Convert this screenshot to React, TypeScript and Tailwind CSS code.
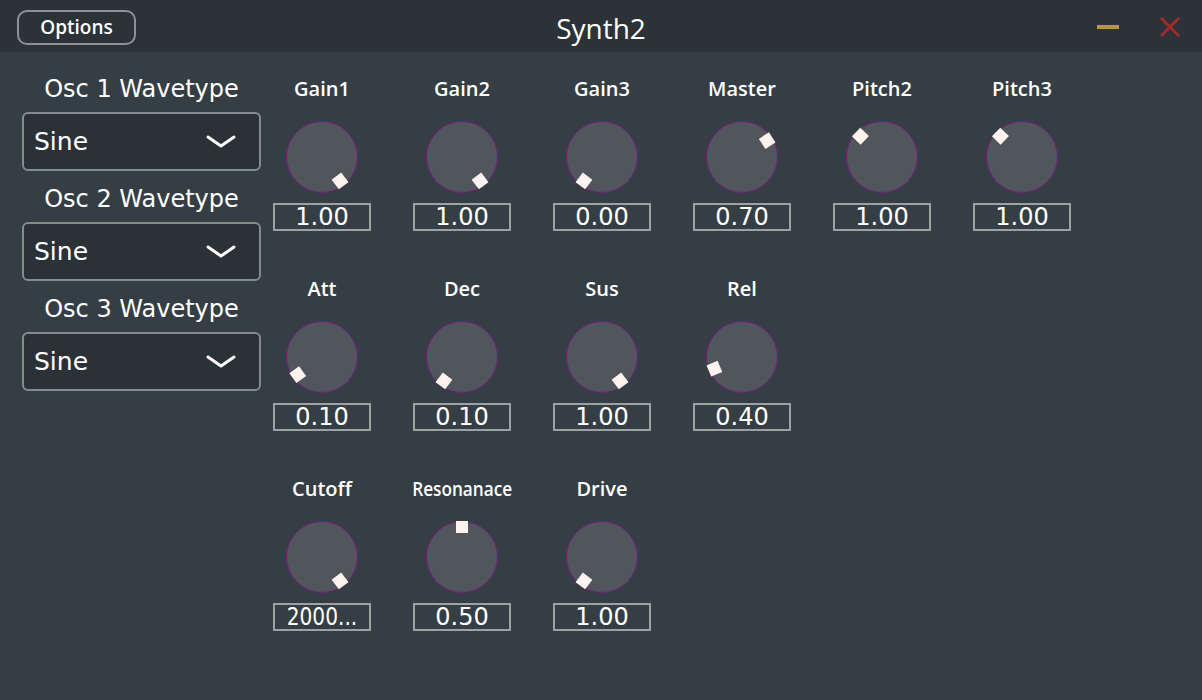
import React from "react"

type KnobData = {
  label: string
  value: string
  angle: number
  squash?: boolean
  squashValue?: boolean
}

const rows: KnobData[][] = [
  [
    { label: "Gain1", value: "1.00", angle: 143 },
    { label: "Gain2", value: "1.00", angle: 143 },
    { label: "Gain3", value: "0.00", angle: -143 },
    { label: "Master", value: "0.70", angle: 57 },
    { label: "Pitch2", value: "1.00", angle: -46 },
    { label: "Pitch3", value: "1.00", angle: -46 }
  ],
  [
    { label: "Att", value: "0.10", angle: -126 },
    { label: "Dec", value: "0.10", angle: -143 },
    { label: "Sus", value: "1.00", angle: 143 },
    { label: "Rel", value: "0.40", angle: -113 }
  ],
  [
    { label: "Cutoff", value: "2000...", angle: 143, squashValue: true },
    { label: "Resonanace", value: "0.50", angle: 0, squash: true },
    { label: "Drive", value: "1.00", angle: -143 }
  ]
]

const dejavu = { fontFamily: '"DejaVu Sans", "Noto Sans", sans-serif' }
const openSans = { fontFamily: '"Open Sans", "Noto Sans", sans-serif' }

function Knob({ label, value, angle, squash, squashValue }: KnobData) {
  return (
    <div className="w-[140px] h-[200px] flex flex-col items-center">
      <div
        className={`h-[20px] leading-[20px] text-[20px] font-semibold text-white whitespace-nowrap ${squash ? "scale-x-[0.86]" : ""}`}
        style={openSans}
      >
        {label}
      </div>

      {/* rotary */}
      <div className="relative mt-[22px] w-[72px] h-[72px] rounded-full bg-[#50565c] border border-[#7a1b80]">
        <div
          className="absolute left-1/2 top-1/2 -ml-[6px] -mt-[6px] w-[12px] h-[12px] bg-[#fff3ef]"
          style={{ transform: `rotate(${angle}deg) translateY(-30px)` }}
        />
      </div>

      {/* value box */}
      <div className="mt-[10px] w-[98px] h-[28px] border-2 border-[#9da2a3] flex items-center justify-center text-[24px] leading-none text-white">
        <span className={`whitespace-nowrap ${squashValue ? "scale-x-[0.84]" : ""}`}>
          {value}
        </span>
      </div>
    </div>
  )
}

function WaveSelect({ n }: { n: number }) {
  return (
    <div className="w-[239px] mb-[14px]">
      <div className="h-[28px] leading-[28px] text-center text-[24px] text-white whitespace-nowrap">
        Osc {n} Wavetype
      </div>
      <div className="mt-[9px] h-[59px] rounded-[6px] border-2 border-[#868c8e] bg-[#2b3237] flex items-center justify-between pl-[10px] pr-[23px]">
        <span className="text-[25px] text-white">Sine</span>
        <svg width="30" height="14" viewBox="0 0 30 14">
          <polyline
            points="2,2 15,11 28,2"
            fill="none"
            stroke="#ffffff"
            strokeWidth="3"
            strokeLinecap="round"
            strokeLinejoin="round"
          />
        </svg>
      </div>
    </div>
  )
}

export default function App() {
  return (
    <div
      className="w-[1202px] h-[700px] bg-[#353e44] flex flex-col overflow-hidden"
      style={dejavu}
    >
      {/* HEADER */}
      <div className="h-[52px] shrink-0 bg-[#2b3238] grid grid-cols-[1fr_auto_1fr] items-center">
        <div className="pl-[17px] pt-[3px]">
          <button
            className="w-[119px] h-[35px] rounded-[10px] border-2 border-[#8c9294] text-[19px] font-semibold text-white leading-none"
            style={openSans}
          >
            Options
          </button>
        </div>

        <div className="text-[28px] font-medium text-white pt-[3px]" style={openSans}>
          Synth2
        </div>

        <div className="flex items-center justify-end gap-[41px] pr-[22px] pt-[2px]">
          <div className="w-[22px] h-[4px] bg-[#b8983a]" />
          <svg width="20" height="20" viewBox="0 0 20 20">
            <path d="M1 1 L19 19 M19 1 L1 19" stroke="#a32a2a" strokeWidth="3" />
          </svg>
        </div>
      </div>

      {/* BODY */}
      <div className="flex">
        <div className="w-[252px] shrink-0 pl-[22px] pt-[23px]">
          <WaveSelect n={1} />
          <WaveSelect n={2} />
          <WaveSelect n={3} />
        </div>

        <div className="pt-[27px] flex flex-col">
          {rows.map((row, i) => (
            <div key={i} className="flex">
              {row.map((k) => (
                <Knob key={k.label} {...k} />
              ))}
            </div>
          ))}
        </div>
      </div>
    </div>
  )
}
